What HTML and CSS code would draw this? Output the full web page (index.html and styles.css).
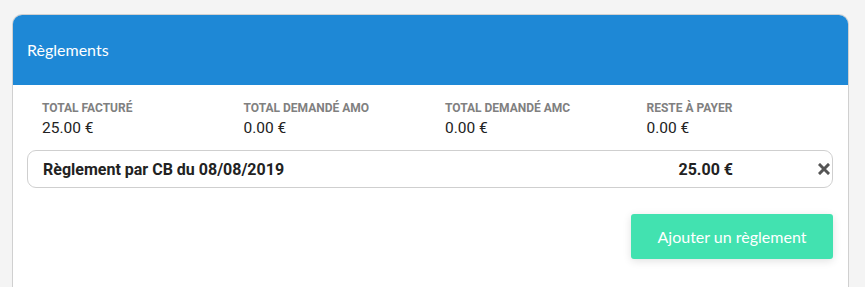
FILE: index.html
```html
<!DOCTYPE html>
<html lang="fr">
<head>
    <meta charset="UTF-8">
    <meta name="viewport" content="width=device-width, initial-scale=1.0">
    <title>Règlements</title>
    <link rel="stylesheet" href="styles.css">
</head>
<body>
    <div class="card">
        <div class="card-header">
            <h2>Règlements</h2>
        </div>
        <div class="card-body">
            <div class="totals">
                <div class="total">
                    <span class="label">Total facturé</span>
                    <span class="value">25.00 €</span>
                </div>
                <div class="total">
                    <span class="label">Total demandé AMO</span>
                    <span class="value">0.00 €</span>
                </div>
                <div class="total">
                    <span class="label">Total demandé AMC</span>
                    <span class="value">0.00 €</span>
                </div>
                <div class="total">
                    <span class="label">Reste à payer</span>
                    <span class="value">0.00 €</span>
                </div>
            </div>
            <div class="payment">
                <span class="payment-name">Règlement par CB du 08/08/2019</span>
                <span class="payment-amount">25.00 €</span>
                <button class="remove" title="Supprimer">
                    <svg width="12" height="12" viewBox="0 0 12 12">
                        <path d="M2 2 L10 10 M10 2 L2 10" stroke="#555" stroke-width="3" stroke-linecap="square"/>
                    </svg>
                </button>
            </div>
            <div class="actions">
                <button class="add-btn">Ajouter un règlement</button>
            </div>
        </div>
    </div>
</body>
</html>
```

FILE: styles.css
```css
html, body {
    height: 100%;
}

body {
    margin: 0;
    padding: 14px 16px 0 12px;
    box-sizing: border-box;
    background-color: #f4f4f4;
    font-family: Roboto, "Liberation Sans", sans-serif;
    color: #222;
    overflow: hidden;
}

.card {
    background-color: #fff;
    border: 1px solid #d0d0d0;
    border-bottom: none;
    border-radius: 10px 10px 0 0;
    overflow: hidden;
    height: 100%;
    box-sizing: border-box;
}

.card-header {
    background-color: #1e88d6;
    height: 70px;
    display: flex;
    align-items: center;
    padding: 0 14px;
}

.card-header h2 {
    margin: 0 0 2px;
    font-family: Lato, "Open Sans", sans-serif;
    font-weight: 400;
    font-size: 16px;
    color: #fff;
}

.card-body {
    padding: 16px 15px 0 14px;
}

.totals {
    display: grid;
    grid-template-columns: repeat(4, 1fr);
}

.total {
    display: flex;
    flex-direction: column;
    padding-left: 15px;
}

.label {
    font-size: 12px;
    font-weight: 700;
    text-transform: uppercase;
    color: #808080;
    line-height: 15px;
}

.value {
    font-size: 15.5px;
    line-height: 22px;
    margin-top: 1px;
    color: #222;
}

.payment {
    margin-top: 11px;
    height: 36px;
    border: 1px solid #cfcfcf;
    border-radius: 9px;
    display: flex;
    align-items: center;
    padding: 0 1px 0 15px;
}

.payment-name,
.payment-amount {
    font-size: 16px;
    font-weight: 700;
    color: #222;
}

.payment-name {
    flex: 1;
}

.remove {
    border: none;
    background: none;
    padding: 0;
    margin-left: 84px;
    width: 14px;
    height: 14px;
    display: flex;
    align-items: center;
    justify-content: center;
    cursor: pointer;
}

.actions {
    display: flex;
    justify-content: flex-end;
    margin-top: 26px;
}

.add-btn {
    width: 202px;
    height: 45px;
    border: none;
    border-radius: 3px;
    background-color: #42e2b0;
    color: #fff;
    font-family: Lato, "Open Sans", sans-serif;
    font-size: 16px;
    box-shadow: 0 2px 8px rgba(0, 0, 0, 0.12);
    cursor: pointer;
}
```
